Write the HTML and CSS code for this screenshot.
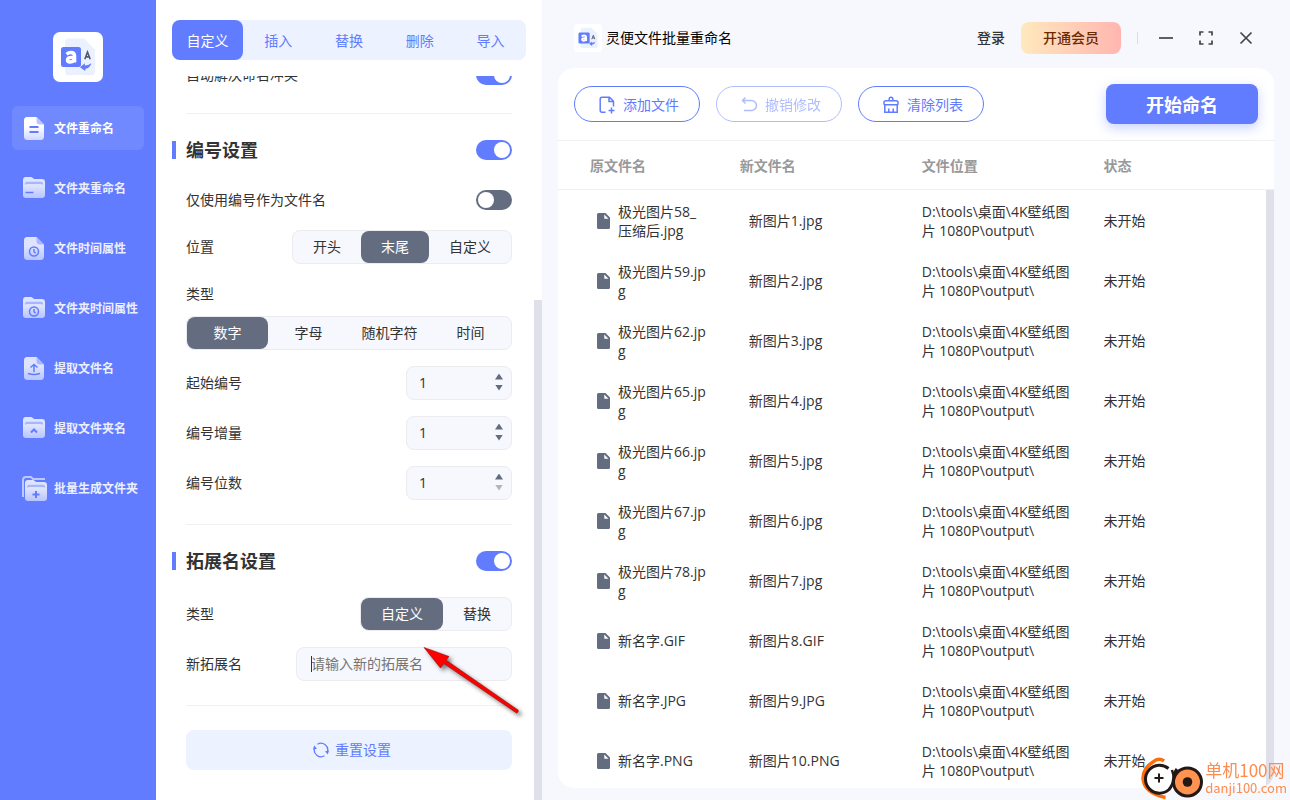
FILE: index.html
```
<!DOCTYPE html>
<html lang="zh-CN">
<head>
<meta charset="utf-8">
<title>灵便文件批量重命名</title>
<link rel="stylesheet" href="styles.css">
</head>
<body>
<svg class="defs" width="0" height="0" aria-hidden="true">
  <defs>
    <linearGradient id="fade" x1="0" y1="0" x2="0" y2="1"><stop offset="0.4" stop-color="#fff"/><stop offset="1" stop-color="#cfd7ff"/></linearGradient>
    <symbol id="logo" viewBox="0 0 50 50">
      <path d="M16 6.500h15L42 17.500V40q0 3-3 3H15q-3 0-3-3V9.500q0-3 4-3z" fill="#ebf1ff"/>
      <rect x="8" y="15" width="20" height="20" rx="2.500" fill="#617cfe"/>
      <path d="M13.600 22.200q2-1.700 4.300-1.700 3.700 0 3.700 3.600v6.400M21.500 25.400h-2.700q-4.300 0-4.300 2.500 0 2.100 2.500 2.100 3 0 4.500-2.700" fill="none" stroke="#fff" stroke-width="3.400"/>
      <path d="M31.800 27.200l2.700-7.200 2.700 7.200M32.800 24.900h3.400" fill="none" stroke="#53596b" stroke-width="1.600"/>
      <path d="M27 35.300l4.800-4v2.300q3.500 0 6.500-2.300-1.200 4.800-5.800 5.500l-.3 2.300z" fill="#617cfe"/>
    </symbol>
    <symbol id="file" viewBox="0 0 24 24">
      <path d="M5 1h9.500L22 8.500v12Q22 24 18.500 24h-13Q2 24 2 20.500v-16Q2 1 5 1z" fill="url(#fade)"/>
      <path d="M14.500 1L22 8.500h-4q-3.500 0-3.500-3.500z" fill="#b9c5ff"/>
    </symbol>
    <symbol id="folder" viewBox="0 0 24 24">
      <path d="M4 1h5.500l2.500 2h8q3 0 3 3v13q0 3-3 3H4q-3 0-3-3V4q0-3 3-3z" fill="url(#fade)"/>
      <path d="M3 7.500v1.200q1-.7 3-.7h12q2 0 3 .7V7.500Q21 5.700 19 5.700H5q-2 0-2 1.800z" fill="#b9c5ff"/>
    </symbol>
    <symbol id="clock" viewBox="0 0 24 24"><circle cx="12" cy="15.500" r="4.500"/><path d="M12 13V15.700l1.700 1.600"/></symbol>
  </defs>
</svg>

<div class="app">
  <aside class="sidebar">
    <svg class="brand" viewBox="0 0 50 50" aria-hidden="true"><use href="#logo"/></svg>
    <nav class="nav">
      <a class="nav-item active" href="#"><svg viewBox="0 0 24 24"><use href="#file"/><path d="M7.500 11h9M7.500 16h9"/></svg><span>文件重命名</span></a>
      <a class="nav-item" href="#"><svg viewBox="0 0 24 24"><use href="#folder"/><path d="M3.500 16.500h8"/></svg><span>文件夹重命名</span></a>
      <a class="nav-item" href="#"><svg viewBox="0 0 24 24"><use href="#file"/><use href="#clock"/></svg><span>文件时间属性</span></a>
      <a class="nav-item" href="#"><svg viewBox="0 0 24 24"><use href="#folder"/><use href="#clock"/></svg><span>文件夹时间属性</span></a>
      <a class="nav-item" href="#"><svg viewBox="0 0 24 24"><use href="#file"/><path d="M12 16V9M8.500 11.500L12 8.500l3.500 3M6 17.500q6 2 12 0"/></svg><span>提取文件名</span></a>
      <a class="nav-item" href="#"><svg viewBox="0 0 24 24"><use href="#folder"/><path class="bold" d="M9 16.500l3-3 3 3"/></svg><span>提取文件夹名</span></a>
      <a class="nav-item stacked" href="#"><svg viewBox="0 0 24 24"><path class="back" d="M1 21V4q0-3 3-3h5l2 2h12"/><svg x="2" y="3" width="24" height="24" viewBox="0 0 24 24"><use href="#folder"/></svg><path class="bold" d="M14 15v7M10.500 18.500h7"/></svg><span>批量生成文件夹</span></a>
    </nav>
  </aside>

  <section class="settings">
    <div class="tabs" role="tablist">
      <button class="tab selected" role="tab" aria-selected="true">自定义</button>
      <button class="tab" role="tab">插入</button>
      <button class="tab" role="tab">替换</button>
      <button class="tab" role="tab">删除</button>
      <button class="tab" role="tab">导入</button>
    </div>
    <div class="scroll">
      <form class="form">
        <div class="row"><label for="auto">自动解决命名冲突</label><input class="switch" type="checkbox" id="auto" checked></div>
        <hr>
        <div class="heading"><h2><label for="num">编号设置</label></h2><input class="switch" type="checkbox" id="num" checked></div>
        <div class="row"><label for="only">仅使用编号作为文件名</label><input class="switch" type="checkbox" id="only"></div>
        <div class="row">
          <span id="pos-label">位置</span>
          <div class="segments" role="radiogroup" aria-labelledby="pos-label">
            <label><input type="radio" name="pos">开头</label>
            <label><input type="radio" name="pos" checked>末尾</label>
            <label><input type="radio" name="pos">自定义</label>
          </div>
        </div>
        <div class="stack">
          <span id="type-label">类型</span>
          <div class="segments even" role="radiogroup" aria-labelledby="type-label">
            <label><input type="radio" name="type" checked>数字</label>
            <label><input type="radio" name="type">字母</label>
            <label><input type="radio" name="type">随机字符</label>
            <label><input type="radio" name="type">时间</label>
          </div>
        </div>
        <div class="row"><label for="start">起始编号</label>
          <div class="number"><input id="start" type="number" value="1"><span class="steps"><button type="button" class="up" aria-label="增加"></button><button type="button" class="down" aria-label="减少"></button></span></div></div>
        <div class="row"><label for="step">编号增量</label>
          <div class="number"><input id="step" type="number" value="1"><span class="steps"><button type="button" class="up" aria-label="增加"></button><button type="button" class="down" aria-label="减少"></button></span></div></div>
        <div class="row"><label for="digits">编号位数</label>
          <div class="number"><input id="digits" type="number" value="1" min="1"><span class="steps"><button type="button" class="up" aria-label="增加"></button><button type="button" class="down" aria-label="减少" disabled></button></span></div></div>
        <hr>
        <div class="heading"><h2><label for="ext">拓展名设置</label></h2><input class="switch" type="checkbox" id="ext" checked></div>
        <div class="row">
          <span id="ext-label">类型</span>
          <div class="segments" role="radiogroup" aria-labelledby="ext-label">
            <label><input type="radio" name="exttype" checked>自定义</label>
            <label><input type="radio" name="exttype">替换</label>
          </div>
        </div>
        <div class="row"><label for="newext">新拓展名</label>
          <div class="textbox"><input id="newext" type="text" placeholder="请输入新的拓展名"><i class="caret"></i></div></div>
        <hr>
        <button class="reset" type="button">
          <svg viewBox="0 0 16 16"><path d="M4.500 2.200A6.800 6.800 0 0 1 14.600 9.500M11.500 13.800A6.800 6.800 0 0 1 1.400 6.500"/><path class="solid" d="M12 9.300l4-.8-1.200 3.900zM4 6.700l-4 .8 1.200-3.900z"/></svg>
          重置设置
        </button>
      </form>
      <div class="thumb"></div>
    </div>
    <svg class="arrow" viewBox="0 0 104 74" aria-hidden="true">
      <path d="M4 6.500l25 9-2.800 3.700L98 69q1 2.500-1.500 3L23.800 22.500 20.500 27z"/>
    </svg>
  </section>

  <main class="main">
    <header class="topbar">
      <svg class="mini" viewBox="0 0 50 50" aria-hidden="true"><use href="#logo"/></svg>
      <h1>灵便文件批量重命名</h1>
      <a class="login" href="#">登录</a>
      <button class="vip">开通会员</button>
      <span class="sep"></span>
      <div class="window">
        <button aria-label="最小化"><svg viewBox="0 0 16 16"><path d="M1 8h14"/></svg></button>
        <button aria-label="最大化"><svg viewBox="0 0 16 16"><path d="M2 5.500V2h3.500M10.500 2H14v3.500M14 10.500V14h-3.500M5.500 14H2v-3.500"/></svg></button>
        <button aria-label="关闭"><svg viewBox="0 0 16 16"><path d="M2.500 2.500l11 11M13.500 2.500l-11 11"/></svg></button>
      </div>
    </header>

    <div class="card">
      <div class="toolbar">
        <button class="pill"><svg viewBox="0 0 16 18"><path d="M6.500 16.200H3q-1.800 0-1.800-2V3.200q0-2 1.800-2h7.500l4 4V10.500M10 1.500V5.500h4.300M12.500 11.500v6M9.500 14.500h6"/></svg>添加文件</button>
        <button class="pill" disabled><svg viewBox="0 0 16 18"><path d="M4.500 1.500L1.500 4.500l3 3M1.500 4.500H10.500a4.700 4.700 0 0 1 0 9.900H3"/></svg>撤销修改</button>
        <button class="pill"><svg viewBox="0 0 16 18"><path d="M6.200 4.500V2.800q0-1.500 1.800-1.500t1.800 1.500V4.500M2.800 4.700h10.400q1.800 0 1.800 1.800v1.600q0 .7-.8.700H1.800q-.8 0-.8-.7V6.500q0-1.800 1.800-1.800zM1.800 9v7.300h12.400V9M5.800 12.500v3.500M10.200 12.500v3.500"/></svg>清除列表</button>
        <button class="start">开始命名</button>
      </div>
      <div class="list">
        <table>
          <thead><tr><th>原文件名</th><th>新文件名</th><th>文件位置</th><th>状态</th></tr></thead>
          <tbody id="rows"></tbody>
        </table>
        <div class="list-thumb"></div>
      </div>
    </div>
  </main>
</div>

<div class="badge">
  <svg viewBox="0 0 64 44" aria-hidden="true">
    <path d="M24 5Q18.500 1 13 6 3 12 3 22.500 4 37 25.500 41.500" fill="none" stroke="#ff6d0a" stroke-width="3.500"/>
    <circle cx="47.500" cy="26" r="14" fill="#ff934f" stroke="#231815" stroke-width="3"/>
    <path d="M28.500 12.500A14 14 0 1 0 29 33.500Q33 29 33.500 23T37 13" fill="#fff" stroke="#231815" stroke-width="3"/>
    <path d="M19 17.500v9M14.500 22h9" stroke="#231815" stroke-width="2"/>
    <path d="M32 14l2 7" stroke="#231815" stroke-width="2.500"/>
    <circle cx="47.500" cy="26" r="4.800" fill="#231815"/>
  </svg>
  <p><b>单机100网</b><span>danji100.com</span></p>
</div>
<script src="app.js"></script>
</body>
</html>
```
FILE: styles.css
```
* { box-sizing: border-box; }
body {
  margin: 0;
  font: 14px/20px "Open Sans", "Noto Sans CJK SC", sans-serif;
  color: #333;
  background: #f6f8fd;
  overflow: hidden;
}
button, input { font: inherit; color: inherit; }
button { border: 0; padding: 0; background: none; cursor: pointer; white-space: nowrap; }
a { color: inherit; text-decoration: none; }
h1, h2, p { margin: 0; }
.defs { position: absolute; }
.app { display: flex; height: 100vh; }

/* navigation */
.sidebar { width: 156px; flex: none; padding: 32px 12px; background: #617cfe; }
.brand { display: block; width: 50px; height: 50px; margin: 0 auto 24px; border-radius: 7px; background: #fff; }
.nav { display: flex; flex-direction: column; gap: 16px; }
.nav-item {
  display: flex; align-items: center; gap: 8px; height: 44px; padding: 0 0 0 10px;
  border-radius: 6px; color: #eceffe; font-size: 12px; font-weight: 700; white-space: nowrap;
}
.nav-item span { padding-top: 2px; }
.nav-item svg { width: 24px; height: 24px; flex: none; fill: none; stroke: #617cfe; stroke-width: 1.500; overflow: visible; }
.nav-item > svg { opacity: .8; }
.nav-item.active { background: rgba(255, 255, 255, .1); color: #fff; }
.nav-item.active > svg { opacity: 1; stroke-width: 2; }
.nav-item use[href="#file"], .nav-item use[href="#folder"] { stroke: none; }
.nav-item .bold { stroke-width: 2; }
.nav-item .back { stroke: #d5dcff; stroke-width: 2; }

/* settings panel */
.settings { position: relative; display: flex; flex-direction: column; gap: 16px; width: 386px; flex: none; padding-top: 20px; background: #fff; }
.tabs { display: flex; flex: none; height: 40px; margin: 0 16px; border-radius: 8px; background: #ecf2ff; }
.tab { flex: 1; padding-top: 2px; border-radius: 8px; color: #617cfe; }
.tab.selected { background: #617cfe; color: #fff; }
.scroll { position: relative; display: flex; flex-direction: column; justify-content: flex-end; flex: 1; min-height: 0; overflow: hidden; }
.thumb { position: absolute; right: 0; bottom: 0; width: 8px; height: 69%; background: #e0e0ea; }
.form { display: flex; flex-direction: column; flex: none; gap: 16px; padding: 0 30px 30px; }
.form hr { width: 100%; height: 1px; margin: 8px 0 0; border: 0; background: #f0f0f0; }
.row { display: flex; align-items: center; justify-content: space-between; min-height: 28px; }
.heading { display: flex; align-items: center; gap: 10px; height: 40px; margin-left: -14px; }
.heading::before { content: ""; width: 4px; height: 18px; background: #617cfe; }
.heading h2 { flex: 1; font-size: 18px; line-height: 24px; }
.stack { display: flex; flex-direction: column; gap: 8px; line-height: 28px; }

.switch { appearance: none; display: flex; width: 36px; height: 20px; margin: 0; padding: 2px; border-radius: 10px; background: #646d7f; }
.switch::before { content: ""; width: 16px; height: 16px; border-radius: 50%; background: #fff; }
.switch:checked { justify-content: flex-end; background: #617cfe; }

.segments { display: flex; height: 34px; border: 1px solid #ebebf0; border-radius: 8px; background: #f6f8fd; line-height: 32px; }
.segments label { padding: 0 20px; border-radius: 8px; text-align: center; white-space: nowrap; }
.segments.even label { flex: 1; padding: 0; }
.segments label:has(:checked) { background: #646d7f; color: #fff; }
.segments input { position: absolute; opacity: 0; pointer-events: none; }

.number, .textbox { position: relative; display: flex; align-items: center; height: 34px; border: 1px solid #ebebf0; border-radius: 8px; background: #f6f8fd; }
.number { width: 106px; padding: 0 8px 0 12px; }
.textbox { width: 216px; padding: 0 14px; }
.number input, .textbox input { flex: 1; min-width: 0; padding: 0; border: 0; outline: 0; background: none; appearance: textfield; }
.number input::-webkit-inner-spin-button { appearance: none; }
.textbox input::placeholder { color: #757575; opacity: 1; }
.caret { position: absolute; left: 14px; width: 1px; height: 16px; background: #333; }
.steps { display: flex; flex-direction: column; gap: 5px; padding-bottom: 2px; }
.steps button { width: 8px; height: 6px; background: #646d7f; }
.steps .up { clip-path: polygon(50% 0, 100% 100%, 0 100%); }
.steps .down { clip-path: polygon(0 0, 100% 0, 50% 100%); }
.steps button:disabled { background: #b1b5be; }

.reset { display: flex; align-items: center; justify-content: center; gap: 6px; height: 40px; margin-top: 8px; padding-left: 6px; border-radius: 8px; background: #ecf2ff; color: #617cfe; }
.reset svg { width: 16px; height: 16px; fill: none; stroke: #617cfe; stroke-width: 1.300; }
.reset .solid { fill: #617cfe; stroke: none; }
.arrow { position: absolute; left: 264px; top: 641px; width: 104px; height: 74px; overflow: visible; fill: #fe0000; stroke: #8a1010; stroke-width: .6; filter: drop-shadow(3px 3px 2px rgba(0, 0, 0, .5)); pointer-events: none; }

/* main area */
.main { display: flex; flex-direction: column; flex: 1; min-width: 0; padding: 0 16px 12px; }
.topbar { display: flex; align-items: center; height: 68px; flex: none; padding: 8px 12px 0 16px; }
.mini { width: 28px; height: 28px; margin-right: 4px; border-radius: 4px; background: #fff; }
.topbar h1 { flex: 1; font-size: 14px; font-weight: 400; color: #000; }
.login { margin-right: 16px; font-weight: 500; }
.vip { width: 100px; height: 32px; border-radius: 8px; background: linear-gradient(90deg, #ffe9be, #ffb6b0); color: #6b2a00; font-weight: 500; }
.sep { width: 1px; height: 12px; margin: 0 12px 0 16px; background: #dcdde2; }
.window { display: flex; gap: 8px; }
.window button { display: flex; align-items: center; justify-content: center; width: 32px; height: 32px; }
.window svg { width: 16px; height: 16px; fill: none; stroke: #444; stroke-width: 1.700; }

.card { display: flex; flex-direction: column; flex: 1; min-height: 0; border-radius: 16px; background: #fff; overflow: hidden; }
.toolbar { display: flex; align-items: center; gap: 16px; padding: 16px; border-bottom: 1px solid #f0f0f0; }
.pill { display: flex; align-items: center; justify-content: center; gap: 8px; width: 126px; height: 36px; padding: 1px 0 0 4px; border: 1px solid #617cfe; border-radius: 18px; color: #617cfe; }
.pill:disabled { opacity: .5; }
.pill svg { width: 16px; height: 18px; fill: none; stroke: #617cfe; stroke-width: 1.500; overflow: visible; }
.start { width: 152px; height: 40px; margin-left: auto; padding-top: 2px; border-radius: 8px; background: #617cfe; color: #fff; font-size: 18px; font-weight: 700; box-shadow: 0 4px 12px rgba(97, 124, 254, .35); }

.list { position: relative; flex: 1; min-height: 0; overflow: hidden; }
.list-thumb { position: absolute; top: 49px; right: 0; bottom: 0; width: 8px; background: #e0e0ea; }
table { width: 100%; border-spacing: 0; table-layout: fixed; }
th { height: 49px; padding: 2px 0 0; border-bottom: 1px solid #f0f0f0; color: #999; font-weight: 700; text-align: left; }
th:first-child { padding-left: 32px; }
td { height: 60px; padding: 0; line-height: 19px; word-break: break-all; }
tbody td { padding-top: 1px; }
th:nth-child(-n+3) { width: 25.4%; }
td:nth-child(1) { padding: 1px 30px 0 38px; }
td:nth-child(2) { padding-left: 9px; }
td:nth-child(3) { padding-right: 24px; }
.name { display: flex; align-items: center; gap: 7px; }
.name svg { width: 15px; height: 18px; flex: none; fill: #646d7f; fill-rule: evenodd; }

/* site badge */
.badge { position: fixed; right: 3px; bottom: 0; display: flex; align-items: center; gap: 1px; color: #fe8c50; pointer-events: none; }
.badge svg { width: 64px; height: 44px; }
.badge p { display: flex; flex-direction: column; font-family: "Noto Sans CJK SC", sans-serif; }
.badge b { font-size: 17px; line-height: 20px; font-weight: 400; }
.badge span { font-size: 13px; line-height: 16px; }
```
FILE: app.js
```
const files = [
  ["极光图片58_压缩后.jpg", "新图片1.jpg"],
  ["极光图片59.jpg", "新图片2.jpg"],
  ["极光图片62.jpg", "新图片3.jpg"],
  ["极光图片65.jpg", "新图片4.jpg"],
  ["极光图片66.jpg", "新图片5.jpg"],
  ["极光图片67.jpg", "新图片6.jpg"],
  ["极光图片78.jpg", "新图片7.jpg"],
  ["新名字.GIF", "新图片8.GIF"],
  ["新名字.JPG", "新图片9.JPG"],
  ["新名字.PNG", "新图片10.PNG"]
];
const icon = '<svg viewBox="0 0 15 18"><path d="M2.500 1H9.500L14 5.500v10q0 1.500-1.500 1.500h-10Q1 17 1 15.500v-13Q1 1 2.500 1zM8.300 2.500v4.200h4.200z"/></svg>';
document.getElementById("rows").innerHTML = files.map(([from, to]) =>
  `<tr><td><div class="name">${icon}<span>${from}</span></div></td><td>${to}</td><td>D:\\tools\\桌面\\4K壁纸图片 1080P\\output\\</td><td>未开始</td></tr>`
).join("");
```
